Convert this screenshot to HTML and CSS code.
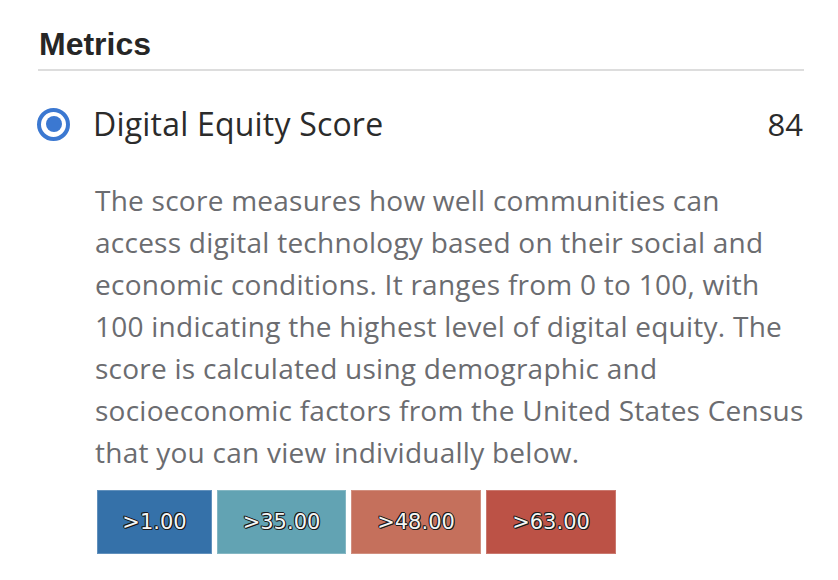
FILE: index.html
```html
<!DOCTYPE html>
<html lang="en">
<head>
<meta charset="utf-8">
<title>Metrics</title>
<link rel="stylesheet" href="styles.css">
</head>
<body>
<section class="panel">
  <h2 class="panel-title">Metrics</h2>
  <div class="metric-row">
    <span class="radio"><span class="radio-dot"></span></span>
    <span class="metric-name">Digital Equity Score</span>
    <span class="metric-value">84</span>
  </div>
  <p class="metric-desc">The score measures how well communities can access digital technology based on their social and economic conditions. It ranges from 0 to 100, with 100 indicating the highest level of digital equity. The score is calculated using demographic and socioeconomic factors from the United States Census that you can view individually below.</p>
  <div class="legend">
    <div class="legend-item c1">&gt;1.00</div>
    <div class="legend-item c2">&gt;35.00</div>
    <div class="legend-item c3">&gt;48.00</div>
    <div class="legend-item c4">&gt;63.00</div>
  </div>
</section>
</body>
</html>
```
FILE: styles.css
```css
html, body {
  margin: 0;
  padding: 0;
  background: #ffffff;
}

.panel {
  width: 766px;
  padding: 26px 0 0 38px;
  font-family: "Open Sans", "Liberation Sans", sans-serif;
}

.panel-title {
  margin: 0;
  padding: 0 0 7px 1px;
  font-family: "Liberation Sans", Arial, sans-serif;
  font-weight: 700;
  font-size: 32px;
  line-height: 36px;
  color: #262626;
  border-bottom: 2px solid #dddddd;
}

.metric-row {
  display: flex;
  align-items: center;
  margin-top: 31px;
  height: 44px;
}

.radio {
  width: 33px;
  height: 33px;
  box-sizing: border-box;
  border: 4px solid #3b78d1;
  border-radius: 50%;
  display: flex;
  align-items: center;
  justify-content: center;
  margin-left: -1px;
}

.radio-dot {
  width: 16px;
  height: 16px;
  border-radius: 50%;
  background: #3b78d1;
}

.metric-name {
  margin-left: 23px;
  font-size: 32px;
  letter-spacing: 0.2px;
  line-height: 44px;
  color: #2b2b2b;
  flex: 1;
}

.metric-value {
  font-size: 31px;
  line-height: 44px;
  color: #2b2b2b;
  margin-right: 1px;
}

.metric-desc {
  margin: 33px 0 0 57px;
  font-size: 28px;
  letter-spacing: 0.25px;
  line-height: 42px;
  color: #6b6c70;
}

.legend {
  display: flex;
  gap: 5px;
  margin: 17px 0 0 59px;
}

.legend-item {
  width: 130px;
  height: 64px;
  box-sizing: border-box;
  border: 1px solid rgba(255, 255, 255, 0.22);
  display: flex;
  align-items: center;
  justify-content: center;
  font-family: "DejaVu Sans", sans-serif;
  font-size: 21px;
  color: #f4f6f6;
  text-shadow: -1px 0 #1a1a1a, 1px 0 #1a1a1a, 0 -1px #1a1a1a, 0 1px #1a1a1a, 1px 1px #1a1a1a, -1px -1px #1a1a1a;
}

.legend-item.c1 { width: 115px; background: #3571a9; }
.legend-item.c2 { width: 129px; background: #62a3b3; }
.legend-item.c3 { background: #c5705c; }
.legend-item.c4 { background: #bc5246; }
```
